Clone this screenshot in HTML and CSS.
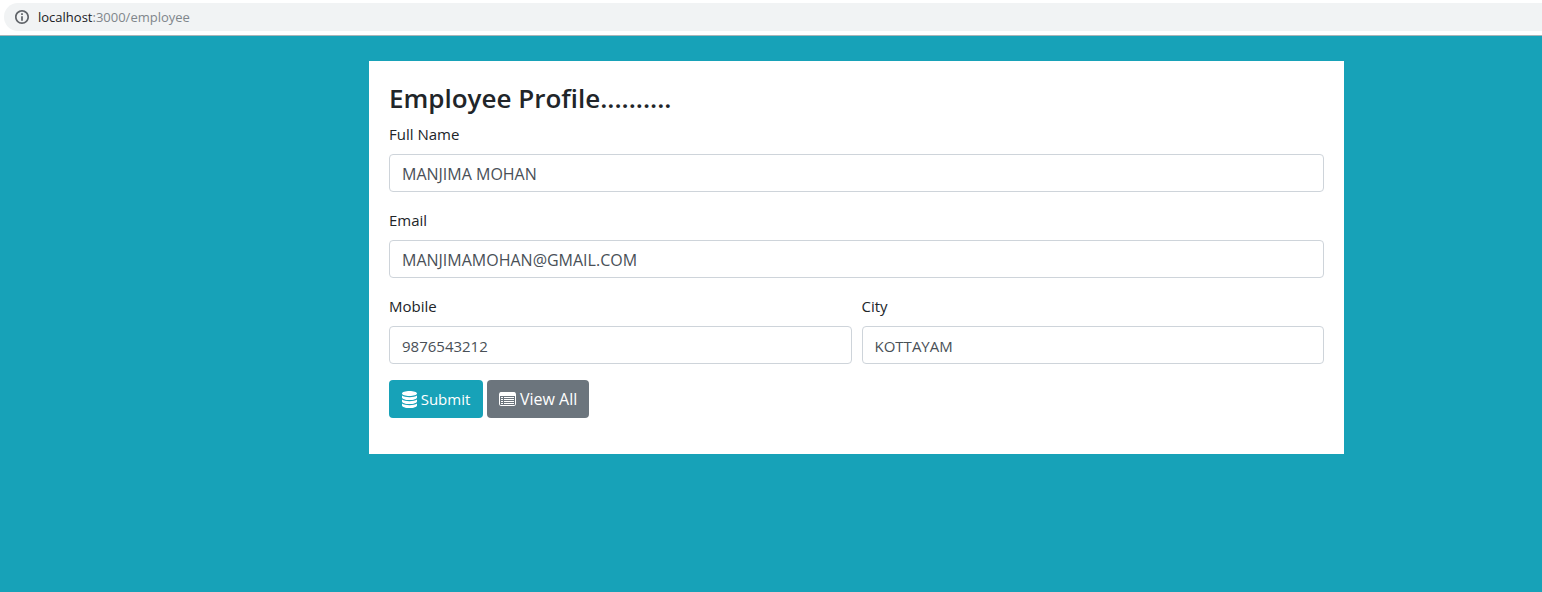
FILE: index.html
```html
<!DOCTYPE html>
<html lang="en">
<head>
  <meta charset="utf-8">
  <title>Employee Profile</title>
  <link rel="stylesheet" href="styles.css">
</head>
<body>
  <header class="toolbar">
    <div class="address">
      <svg class="address-icon" viewBox="0 0 24 24" aria-hidden="true">
        <path fill="currentColor" d="M10.700 6.500h2.600v2.600h-2.600zM10.700 10.800h2.600v6.700h-2.600zM12 1.500C6.200 1.500 1.500 6.200 1.500 12S6.200 22.500 12 22.500 22.500 17.800 22.500 12 17.800 1.500 12 1.500zm0 18.500c-4.400 0-8-3.600-8-8s3.600-8 8-8 8 3.600 8 8-3.600 8-8 8z"/>
      </svg>
      <span class="address-url"><span class="address-host">localhost</span>:3000/employee</span>
    </div>
  </header>
  <main class="page">
    <form class="card">
      <h3 class="title">Employee Profile..........</h3>
      <div class="field">
        <label class="label" for="name">Full Name</label>
        <input class="input input-large" id="name" type="text" value="MANJIMA MOHAN">
      </div>
      <div class="field">
        <label class="label" for="email">Email</label>
        <input class="input input-large" id="email" type="text" value="MANJIMAMOHAN@GMAIL.COM">
      </div>
      <div class="row">
        <div class="field">
          <label class="label" for="mobile">Mobile</label>
          <input class="input" id="mobile" type="text" value="9876543212">
        </div>
        <div class="field">
          <label class="label" for="city">City</label>
          <input class="input" id="city" type="text" value="KOTTAYAM">
        </div>
      </div>
      <div class="actions">
        <button class="button button-submit" type="submit">
          <svg class="icon-db" viewBox="0 0 15 17" aria-hidden="true">
            <path fill="currentColor" d="M7.500 0C3.500 0 0 1.100 0 2.500S3.500 5 7.500 5 15 3.900 15 2.500 11.500 0 7.500 0zM0 4.500c1.500 1.200 4.300 1.700 7.500 1.700s6-.5 7.500-1.700v1.900C15 7.800 11.500 9 7.500 9S0 7.800 0 6.400zM0 8.500c1.500 1.200 4.300 1.700 7.500 1.700s6-.5 7.500-1.700v1.900c0 1.400-3.500 2.600-7.500 2.600S0 11.800 0 10.400zM0 12.500c1.500 1.200 4.300 1.700 7.500 1.700s6-.5 7.500-1.700v1.900c0 1.400-3.500 2.600-7.500 2.600S0 15.800 0 14.400z"/>
          </svg>
          <span>Submit</span>
        </button>
        <button class="button button-view" type="button">
          <svg class="icon-list" viewBox="0 0 17 14" aria-hidden="true">
            <rect x=".5" y=".5" width="16" height="13" rx="1.200" fill="none" stroke="currentColor"/>
            <path fill="currentColor" d="M1 .5h15V4H1zM2 5h2v1H2zM5 5h10v1H5zM2 7h2v1H2zM5 7h10v1H5zM2 9h2v1H2zM5 9h10v1H5zM2 11h2v1H2zM5 11h10v1H5z"/>
          </svg>
          <span>View All</span>
        </button>
      </div>
    </form>
  </main>
</body>
</html>
```
FILE: styles.css
```css
* {
  box-sizing: border-box;
}

body {
  margin: 0;
  min-height: 100vh;
  display: flex;
  flex-direction: column;
  background: #17a2b8;
  color: #212529;
  font-family: "Segoe UI", "Open Sans", "Noto Sans", sans-serif;
  font-size: 15px;
  line-height: 24px;
}

.toolbar {
  padding: 3px 0 4px 4px;
  background: #fff;
  border-bottom: 1px solid #a9b4b8;
}

.address {
  display: flex;
  align-items: center;
  gap: 8px;
  height: 28px;
  padding-left: 10px;
  border-radius: 14px 0 0 14px;
  background: #f1f3f4;
  color: #80868b;
  font-size: 13px;
}

.address-icon {
  width: 16px;
  height: 16px;
  color: #5f6368;
}

.address-host {
  color: #202124;
}

.page {
  display: grid;
  grid-template-columns: 369fr 975fr 198fr;
  padding: 25px 0;
}

.card {
  grid-column: 2;
  padding: 21px 20px 36px;
  background: #fff;
}

.title {
  margin: 0 0 7px;
  font-size: 26px;
  font-weight: 600;
  line-height: 33px;
}

.field {
  margin-bottom: 16px;
}

.label {
  display: block;
  margin-bottom: 8px;
}

.input {
  display: block;
  width: 100%;
  height: 38px;
  padding: 7px 12px 5px;
  border: 1px solid #ced4da;
  border-radius: 4px;
  background: #fff;
  color: #495057;
  font: inherit;
}

.input-large {
  font-size: 16px;
}

.row {
  display: grid;
  grid-template-columns: 1fr 1fr;
  gap: 10px;
}

.actions {
  display: flex;
  gap: 4px;
}

.button {
  display: flex;
  align-items: center;
  justify-content: center;
  gap: 4px;
  min-width: 94px;
  height: 38px;
  padding: 0 12px;
  border: 0;
  border-radius: 4px;
  color: #fff;
  font: inherit;
}

.button-submit {
  background: #17a2b8;
}

.button-view {
  background: #6c757d;
  font-size: 16px;
}

.icon-db {
  width: 15px;
  height: 17px;
}

.icon-list {
  width: 17px;
  height: 14px;
}
```
